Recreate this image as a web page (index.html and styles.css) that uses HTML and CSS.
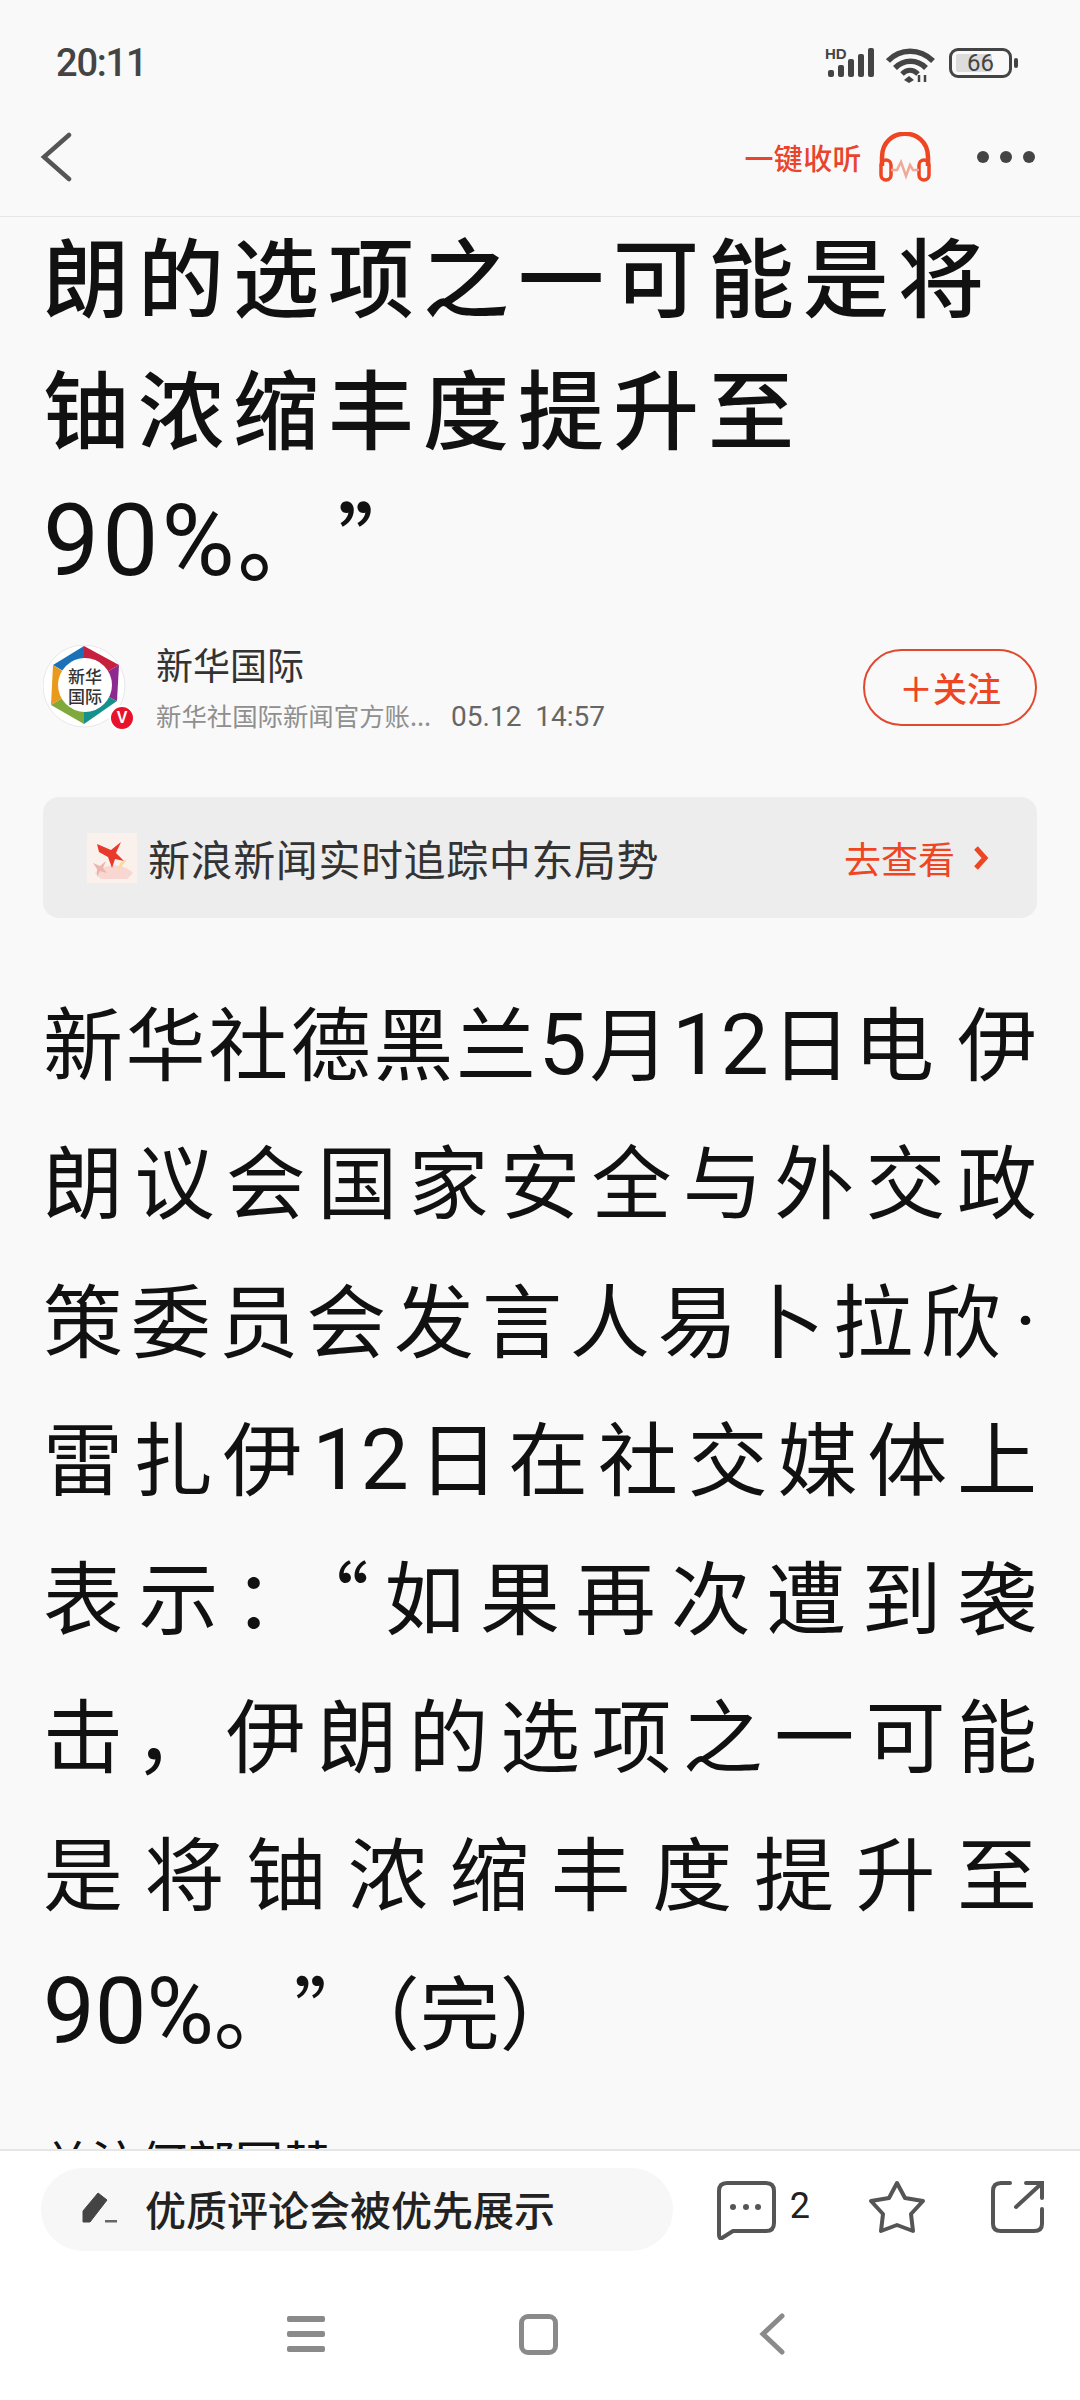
FILE: index.html
```html
<!DOCTYPE html>
<html lang="zh-CN">
<head>
    <meta charset="UTF-8">
    <meta name="viewport" content="width=device-width, initial-scale=1.0">
    <title>新华国际</title>
    <link rel="stylesheet" href="styles.css">
</head>
<body>
<div class="app">
    <header class="top">
        <div class="status">
            <span class="clock">20:11</span>
            <div class="status-icons">
                <span class="hd">HD</span>
                <svg class="signal" width="50" height="32" viewBox="0 0 50 32">
                    <rect x="3" y="23" width="6" height="7" rx="2"/>
                    <rect x="13" y="18" width="6" height="12" rx="2"/>
                    <rect x="23" y="12" width="6" height="18" rx="2"/>
                    <rect x="33" y="7" width="6" height="23" rx="2"/>
                    <rect x="43" y="1" width="6" height="29" rx="2"/>
                </svg>
                <svg class="wifi" width="50" height="36" viewBox="0 0 50 36">
                    <path d="M2 14 C14 1 34 1 47 14" fill="none" stroke="#444" stroke-width="5.5"/>
                    <path d="M9 21 C18 12 31 12 40 21" fill="none" stroke="#444" stroke-width="5.5"/>
                    <path d="M16 27 C21 22 27 22 32 27" fill="none" stroke="#444" stroke-width="5"/>
                    <path d="M23 29 L28 33 L23 36 L18 33 Z" fill="#444"/>
                    <path d="M33 35 V28 M39 35 V28" stroke="#444" stroke-width="2.5"/>
                </svg>
                <div class="battery">
                    <span class="battery-level"></span>
                    <span class="battery-num">66</span>
                </div>
                <span class="battery-tip"></span>
            </div>
        </div>
        <nav class="nav">
            <svg width="34" height="50" viewBox="0 0 34 50"><path d="M30 3 L5 25 L30 47" fill="none" stroke="#555" stroke-width="4.5" stroke-linecap="round"/></svg>
            <div class="nav-right">
                <span class="listen">一键收听</span>
                <svg class="phones" width="54" height="50" viewBox="0 0 54 50">
                    <path d="M4 34 V25 C4 -6 50 -6 50 25 V34" fill="none" stroke="#ee4522" stroke-width="4.5"/>
                    <rect x="3" y="28" width="10" height="20" rx="5" fill="none" stroke="#ee4522" stroke-width="3.5"/>
                    <rect x="41" y="28" width="10" height="20" rx="5" fill="none" stroke="#ee4522" stroke-width="3.5"/>
                    <path d="M13 38 H19 L23 30 L28 44 L32 33 L35 38 H41" fill="none" stroke="#f2a899" stroke-width="2.5"/>
                </svg>
                <div class="dots"><i></i><i></i><i></i></div>
            </div>
        </nav>
    </header>

    <main class="article">
        <h1 class="title">
            <span class="title-line">朗的选项之一可能是将</span>
            <span class="title-line">铀浓缩丰度提升至</span>
            <span class="title-line"><b class="title-num">90%</b>。<span class="title-quote">”</span></span>
        </h1>
        <div class="author">
            <div class="avatar">
                <svg width="84" height="84" viewBox="0 0 84 84">
                    <circle cx="41" cy="41" r="41" fill="#fff" stroke="#e8e8e8"/>
                    <polygon points="10,20 41,1 44,40" fill="#1b71b7"/>
                    <polygon points="41,1 76,20 41,40" fill="#c6203f"/>
                    <polygon points="76,20 74,56 41,40" fill="#8d2a90"/>
                    <polygon points="74,56 41,79 41,40" fill="#16908a"/>
                    <polygon points="41,79 8,60 41,40" fill="#7fa93a"/>
                    <polygon points="8,60 10,20 41,40" fill="#e99a1c"/>
                    <circle cx="42" cy="40" r="27" fill="#fff"/>
                </svg>
                <span class="avatar-text">新华<br>国际</span>
                <span class="vip">V</span>
            </div>
            <div class="author-info">
                <div class="author-name">新华国际</div>
                <div class="author-sub"><span>新华社国际新闻官方账...</span><span class="author-time">05.12&nbsp;&nbsp;14:57</span></div>
            </div>
            <button class="follow">＋关注</button>
        </div>
        <div class="banner">
            <svg class="thumb" width="50" height="50" viewBox="0 0 50 50">
                <rect width="50" height="50" fill="#faf0ec"/>
                <path d="M8 40 C18 30 36 30 46 40 L40 46 H14 Z" fill="#f8d6d2"/>
                <path d="M33 30 L40 26 L30 40 Z" fill="#f7dc9c"/>
                <path d="M10 11 L24 17 L34 9 L29 20 L37 28 L28 26 L25 35 L21 24 L12 19 Z" fill="#e8392a"/>
                <path d="M6 30 L13 33 L19 28 L16 35 L20 40 L13 38 L10 44 L10 36 Z" fill="#eeb4ae"/>
            </svg>
            <span class="banner-text">新浪新闻实时追踪中东局势</span>
            <span class="banner-link">去查看</span>
            <svg width="16" height="26" viewBox="0 0 16 26"><path d="M3 3 L12 13 L3 23" fill="none" stroke="#ee4522" stroke-width="5"/></svg>
        </div>
        <div class="body-text">
            <p>新华社德黑兰<b class="num">5</b>月<b class="num">12</b>日电 伊</p>
            <p>朗议会国家安全与外交政</p>
            <p>策委员会发言人易卜拉欣<b class="num dot">·</b></p>
            <p>雷扎伊<b class="num">12</b>日在社交媒体上</p>
            <p>表示：“如果再次遭到袭</p>
            <p>击，伊朗的选项之一可能</p>
            <p>是将铀浓缩丰度提升至</p>
            <p class="last"><b class="num big">90%</b>。”<span class="paren">（</span>完）</p>
            <p class="last next">关注何部回替</p>
        </div>
    </main>

    <footer class="bottom">
        <div class="actions">
            <div class="comment-box">
                <svg width="36" height="32" viewBox="0 0 36 32">
                    <path d="M1 30 V19 L16 1 L25 8 L8 30 Z" fill="#444" stroke="#444" stroke-linejoin="round"/>
                    <rect x="23" y="28" width="12" height="2.5" fill="#666"/>
                </svg>
                <span>优质评论会被优先展示</span>
            </div>
            <div class="action-icons">
                <svg width="60" height="60" viewBox="0 0 60 60">
                    <path d="M3 50 V11 Q3 3 11 3 H50 Q58 3 58 11 V43 Q58 51 50 51 H17 L6 58 Q3 59 3 55 Z" fill="none" stroke="#555" stroke-width="4" stroke-linejoin="round"/>
                    <circle cx="17" cy="27" r="3" fill="#555"/><circle cx="30" cy="27" r="3" fill="#555"/><circle cx="42" cy="27" r="3" fill="#555"/>
                </svg>
                <span class="count">2</span>
                <svg class="star" width="58" height="54" viewBox="0 0 58 54">
                    <path d="M29 3 L37 18 L55 21 L43 34 L45 51 L29 45 L13 51 L15 34 L3 21 L21 18 Z" fill="none" stroke="#555" stroke-width="4" stroke-linejoin="round"/>
                </svg>
                <svg class="share" width="54" height="54" viewBox="0 0 54 54">
                    <path d="M19 3 H10 Q2 3 2 11 V44 Q2 51 10 51 H43 Q51 51 51 44 V29" fill="none" stroke="#555" stroke-width="4" stroke-linecap="round"/>
                    <path d="M25 27 L50 4 M35 3 H51 V18" fill="none" stroke="#555" stroke-width="4" stroke-linecap="round"/>
                </svg>
            </div>
        </div>
        <div class="sysnav">
            <div class="sys-menu"><i></i><i></i><i></i></div>
            <div class="sys-home"></div>
            <svg width="26" height="42" viewBox="0 0 26 42"><path d="M23 3 L4 21 L23 39" fill="none" stroke="#8a8a8a" stroke-width="5" stroke-linecap="round"/></svg>
        </div>
    </footer>
</div>
</body>
</html>
```
FILE: styles.css
```css
* {
    box-sizing: border-box;
}
body {
    margin: 0;
    background-color: #f9f9f9;
    font-family: "Noto Sans CJK SC", "Noto Sans", sans-serif;
    color: #111;
}
.app {
    width: 1080px;
    height: 2400px;
    display: flex;
    flex-direction: column;
    overflow: hidden;
}
svg {
    display: block;
    flex: none;
}

/* status bar + nav */
.top {
    height: 217px;
    flex: none;
    border-bottom: 1px solid #e6e6e6;
    background-color: #f9f9f9;
}
.status {
    height: 100px;
    padding: 41px 62px 0 56px;
    display: flex;
    justify-content: space-between;
}
.clock {
    font-family: Roboto, sans-serif;
    font-size: 38px;
    font-weight: 500;
    line-height: 44px;
    letter-spacing: -1.2px;
    color: #444;
}
.status-icons {
    position: relative;
    display: flex;
    align-items: flex-start;
    height: 44px;
    padding-top: 6px;
}
.hd {
    position: absolute;
    left: 0;
    top: 6px;
    font-family: "Liberation Sans", sans-serif;
    font-size: 15px;
    font-weight: 700;
    line-height: 14px;
    color: #444;
}
.signal {
    fill: #444;
    margin-right: 11px;
}
.wifi {
    margin-right: 13px;
}
.battery {
    position: relative;
    width: 63px;
    height: 30px;
    margin-top: 1px;
    border: 3.5px solid #444;
    border-radius: 9px;
    display: flex;
    align-items: center;
    justify-content: center;
}
.battery-level {
    position: absolute;
    left: 4px;
    top: 3px;
    bottom: 3px;
    width: 36px;
    background-color: #dcdcdc;
    border-radius: 2px;
}
.battery-num {
    position: relative;
    font-family: Roboto, sans-serif;
    font-size: 24px;
    line-height: 24px;
    color: #444;
}
.battery-tip {
    width: 4px;
    height: 10px;
    margin: 11px 0 0 2px;
    background-color: #444;
    border-radius: 2px;
}
.nav {
    height: 114px;
    padding: 0 45px 0 39px;
    display: flex;
    align-items: center;
    justify-content: space-between;
}
.nav-right {
    display: flex;
    align-items: center;
}
.listen {
    font-size: 29px;
    font-weight: 500;
    line-height: 40px;
    letter-spacing: 0.4px;
    color: #e8452c;
    margin-right: 16px;
}
.dots {
    display: flex;
    gap: 11px;
    margin-left: 45px;
}
.dots i {
    width: 12px;
    height: 12px;
    border-radius: 50%;
    background-color: #444;
}

/* article */
.article {
    flex: 1;
    min-height: 0;
    overflow: hidden;
    padding: 0 43px;
}
.title {
    margin: -9px 0 0;
    font-size: 86px;
    font-weight: 500;
    line-height: 132px;
    letter-spacing: 9px;
    text-spacing-trim: space-all;
}
.title-line {
    display: block;
    height: 132px;
    white-space: nowrap;
}
.title-num {
    font-family: Roboto, sans-serif;
    font-size: 100px;
    font-weight: 400;
    letter-spacing: 3px;
}
.title-quote {
    margin-left: 5px;
}
.author {
    margin-top: 41px;
    height: 84px;
    display: flex;
    align-items: center;
}
.avatar {
    position: relative;
    width: 84px;
    height: 84px;
    flex: none;
}
.avatar-text {
    position: absolute;
    left: 24px;
    top: 21px;
    width: 36px;
    font-size: 17px;
    font-weight: 500;
    line-height: 20px;
    text-align: center;
    color: #333;
}
.vip {
    position: absolute;
    right: -8px;
    bottom: -2px;
    width: 26px;
    height: 26px;
    border: 2px solid #fff;
    border-radius: 50%;
    background-color: #e8132b;
    color: #fff;
    font-family: "Liberation Sans", sans-serif;
    font-size: 16px;
    font-weight: 700;
    line-height: 22px;
    text-align: center;
}
.author-info {
    flex: 1;
    margin-left: 29px;
}
.author-name {
    font-size: 37px;
    line-height: 50px;
    color: #333;
}
.author-sub {
    margin-top: 8px;
    font-size: 25.4px;
    line-height: 36px;
    color: #8f8f8f;
}
.author-time {
    margin-left: 20px;
    font-family: Roboto, sans-serif;
    font-size: 28px;
    color: #666;
}
.follow {
    width: 174px;
    height: 77px;
    padding: 0;
    flex: none;
    border: 2px solid #e0492f;
    border-radius: 39px;
    background: none;
    font-family: inherit;
    font-size: 34px;
    font-weight: 500;
    color: #ee4522;
}
.banner {
    margin-top: 68px;
    height: 121px;
    padding: 0 48px 0 44px;
    display: flex;
    align-items: center;
    background-color: #ededed;
    border-radius: 16px;
}
.banner-text {
    flex: 1;
    margin-left: 11px;
    font-size: 42px;
    letter-spacing: 0.6px;
    color: #333;
}
.banner-link {
    margin-right: 18px;
    font-size: 37px;
    color: #ee4522;
}
.body-text {
    margin-top: 52px;
    font-size: 80px;
    line-height: 138.4px;
    color: #111;
}
.body-text p {
    margin: 0;
    height: 138.4px;
    white-space: nowrap;
    text-align: justify;
    text-align-last: justify;
    text-justify: inter-character;
}
.body-text p.last {
    text-align-last: left;
    text-spacing-trim: space-all;
}
.body-text p.next {
    height: 60px;
    margin-top: 53px;
    font-size: 48px;
    line-height: 60px;
}
.num {
    font-family: Roboto, sans-serif;
    font-size: 86px;
    font-weight: 400;
}
.num.big {
    font-size: 92px;
}
.num.dot {
    margin-left: 6px;
}
.paren {
    font-feature-settings: "halt";
    margin-left: 6px;
}

/* bottom bar */
.bottom {
    height: 251px;
    flex: none;
    background-color: #fff;
    border-top: 2px solid #e6e6e6;
}
.actions {
    height: 118px;
    padding: 17px 35px 0 41px;
    display: flex;
    align-items: flex-start;
    justify-content: space-between;
}
.comment-box {
    width: 632px;
    height: 83px;
    padding: 0 0 4px 41px;
    display: flex;
    align-items: center;
    gap: 27px;
    background-color: #f7f7f7;
    border-radius: 42px;
    font-size: 41px;
    font-weight: 500;
    color: #222;
}
.action-icons {
    display: flex;
    align-items: flex-start;
    padding-top: 12px;
}
.count {
    margin: 6px 0 0 14px;
    font-family: Roboto, sans-serif;
    font-size: 36px;
    line-height: 40px;
    color: #222;
}
.star {
    margin-left: 58px;
}
.share {
    margin-left: 65px;
}
.sysnav {
    padding: 44px 0 0 287px;
    display: flex;
    align-items: center;
}
.sys-menu {
    width: 38px;
    display: flex;
    flex-direction: column;
    gap: 9px;
}
.sys-menu i {
    height: 6px;
    border-radius: 2px;
    background-color: #8a8a8a;
}
.sys-home {
    width: 39px;
    height: 41px;
    margin: 0 201px 0 194px;
    border: 5px solid #8a8a8a;
    border-radius: 9px;
}
```
